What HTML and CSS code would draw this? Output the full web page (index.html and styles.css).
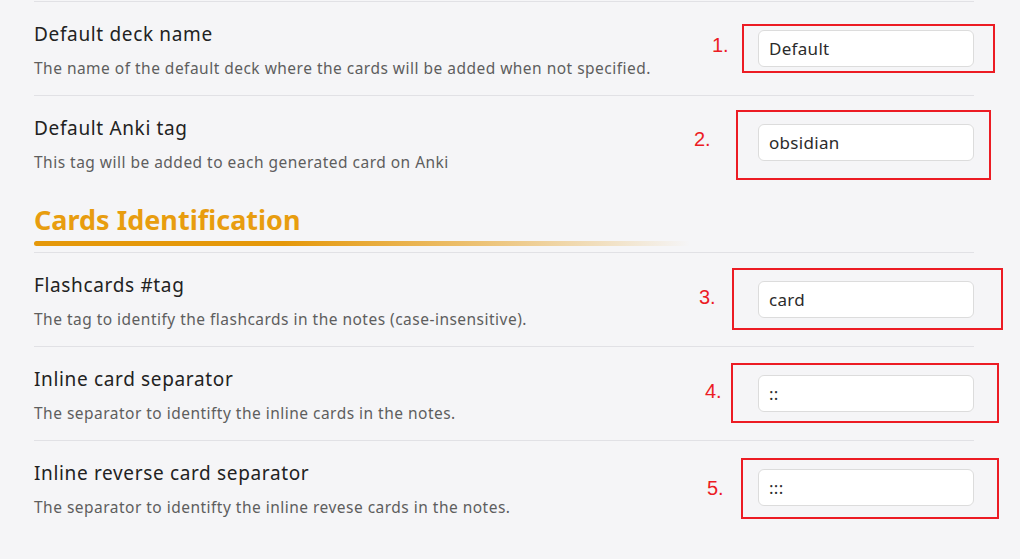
FILE: index.html
```html
<!DOCTYPE html>
<html lang="en">
<head>
<meta charset="utf-8">
<title>Settings</title>
<link rel="stylesheet" href="styles.css">
</head>
<body>
<div class="settings">
  <div class="setting">
    <div class="info">
      <div class="name">Default deck name</div>
      <div class="desc">The name of the default deck where the cards will be added when not specified.</div>
    </div>
    <div class="control"><input class="text-input" type="text" value="Default"></div>
    <div class="mark m1"><span class="num">1.</span><span class="box"></span></div>
  </div>
  <div class="setting last">
    <div class="info">
      <div class="name">Default Anki tag</div>
      <div class="desc">This tag will be added to each generated card on Anki</div>
    </div>
    <div class="control"><input class="text-input" type="text" value="obsidian"></div>
    <div class="mark m2"><span class="num">2.</span><span class="box"></span></div>
  </div>

  <div class="section-head">
    <h2 class="section-title">Cards Identification</h2>
    <div class="section-bar"></div>
  </div>

  <div class="setting">
    <div class="info">
      <div class="name">Flashcards #tag</div>
      <div class="desc">The tag to identify the flashcards in the notes (case-insensitive).</div>
    </div>
    <div class="control"><input class="text-input" type="text" value="card"></div>
    <div class="mark m3"><span class="num">3.</span><span class="box"></span></div>
  </div>
  <div class="setting">
    <div class="info">
      <div class="name">Inline card separator</div>
      <div class="desc">The separator to identifty the inline cards in the notes.</div>
    </div>
    <div class="control"><input class="text-input" type="text" value="::"></div>
    <div class="mark m4"><span class="num">4.</span><span class="box"></span></div>
  </div>
  <div class="setting">
    <div class="info">
      <div class="name">Inline reverse card separator</div>
      <div class="desc">The separator to identifty the inline revese cards in the notes.</div>
    </div>
    <div class="control"><input class="text-input" type="text" value=":::"></div>
    <div class="mark m5"><span class="num">5.</span><span class="box"></span></div>
  </div>
</div>
</body>
</html>
```

FILE: styles.css
```css
html, body {
  margin: 0;
  padding: 0;
  background: #f5f5f7;
}
body {
  font-family: "Noto Sans", "Open Sans", sans-serif;
  color: #222;
  overflow: hidden;
}
.settings {
  width: 940px;
  margin-left: 34px;
  padding-top: 1px;
}
.setting {
  position: relative;
  height: 93px;
  border-top: 1px solid #e1e1e5;
  display: flex;
  align-items: center;
  justify-content: space-between;
}
.info {
  display: flex;
  flex-direction: column;
  gap: 12px;
  padding-top: 2px;
}
.name {
  font-size: 19px;
  line-height: 24px;
  letter-spacing: 0.65px;
  color: #222;
}
.desc {
  font-size: 15.5px;
  line-height: 20px;
  letter-spacing: 0.48px;
  color: #5e5e5e;
}
.control {
  display: flex;
}
.text-input {
  box-sizing: border-box;
  width: 216px;
  height: 37px;
  border: 1px solid #dcdcdc;
  border-radius: 6px;
  background: #fff;
  padding: 0 10px;
  font-family: inherit;
  font-size: 17px;
  letter-spacing: 0.3px;
  color: #2b2b2b;
  outline: none;
}
.section-head {
  padding-top: 14px;
  padding-bottom: 6px;
}
.section-title {
  margin: 0;
  font-size: 27px;
  line-height: 33px;
  font-weight: 700;
  color: #e89d0f;
}
.section-bar {
  margin-top: 5px;
  width: 656px;
  height: 5px;
  border-radius: 3px;
  background: linear-gradient(to right, #e5980a 0%, #e5980a 38%, rgba(229, 152, 10, 0.55) 68%, rgba(229, 152, 10, 0) 100%);
}

/* annotation overlays */
.mark {
  position: absolute;
  top: 0;
  left: 0;
  pointer-events: none;
}
.num {
  position: absolute;
  font-family: "Liberation Sans", "Noto Sans", sans-serif;
  font-size: 20px;
  line-height: 20px;
  color: #ec1c24;
  white-space: nowrap;
}
.box {
  position: absolute;
  box-sizing: border-box;
  border: 2px solid #ec1c24;
}
.m1 .num { left: 678px; top: 33px; }
.m1 .box { left: 708px; top: 22px; width: 253px; height: 49px; }
.m2 .num { left: 660px; top: 33px; }
.m2 .box { left: 702px; top: 14px; width: 255px; height: 70px; }
.m3 .num { left: 665px; top: 34px; }
.m3 .box { left: 698px; top: 15px; width: 271px; height: 62px; }
.m4 .num { left: 671px; top: 34px; }
.m4 .box { left: 697px; top: 16px; width: 268px; height: 60px; }
.m5 .num { left: 673px; top: 37px; }
.m5 .box { left: 707px; top: 17px; width: 258px; height: 61px; }
```
